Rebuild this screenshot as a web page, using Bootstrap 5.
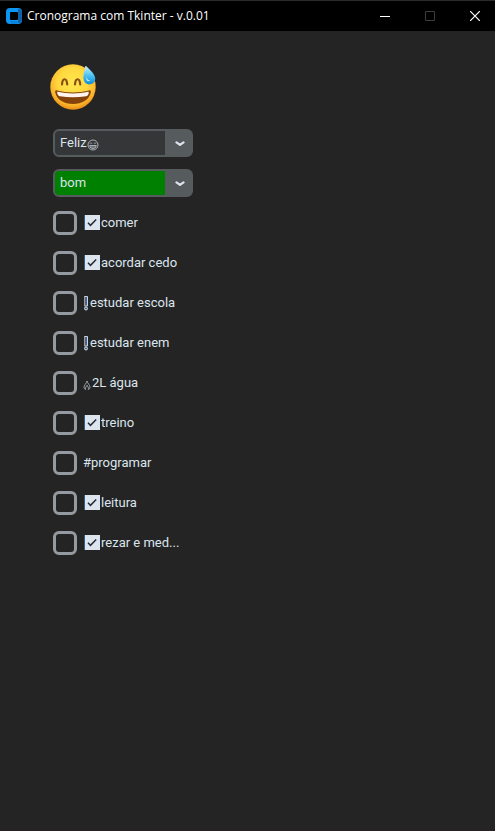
<!DOCTYPE html>
<html lang="pt-BR" data-bs-theme="dark">
<head>
<meta charset="utf-8">
<meta name="viewport" content="width=device-width, initial-scale=1">
<title>Cronograma com Tkinter - v.0.01</title>
<link href="https://cdn.jsdelivr.net/npm/bootstrap@5.3.0/dist/css/bootstrap.min.css" rel="stylesheet">
<style>
body { background: #242424; color: #dce4ee; font: 13px/20px Roboto, sans-serif; border-bottom: 2px solid #272224; }
.titlebar { background: #000; color: #fff; height: 31px; border-top: 1px solid #2b2b2b; font: 12px/30px "Open Sans", sans-serif; padding-left: 6px; }
.app-title { font: inherit; margin-left: 5px; }
.win-buttons { gap: 5px; }
.win-btn { width: 40px; height: 30px; padding: 0; border: 0; border-radius: 0; display: flex; align-items: center; justify-content: center; }
.win-btn:disabled { opacity: 1; border: 0; }
.planner { padding: 32px 48px; }
.mood { margin-bottom: 16px; }
.stack { gap: 12px; padding-left: 5px; }
.combo { width: 140px; height: 28px; border: 2px solid #565b5e; border-radius: 6px; background: #565b5e; overflow: hidden; }
.combo .form-control { background: transparent; color: #dce4ee; font: inherit; padding: 0 5px 2px; border: 0; border-radius: 0; min-height: 0; height: 24px; box-shadow: none; }
.combo-field { background: #343638; width: 110px; height: 24px; position: relative; }
.combo-field.good { background: #008000; }
.grin { position: absolute; left: 32px; top: 8px; }
.combo-btn { flex: 1; padding: 2px 0 0 3px; border: 0; border-radius: 0; height: 24px; display: flex; align-items: center; justify-content: center; }
.task { height: 28px; gap: 6px; }
.task .form-check-input { width: 24px; height: 24px; margin: 0; border: 3px solid #949a9f; border-radius: 6px; background-color: #242424; flex: none; }
.task svg { flex: none; margin: 0 1px; }
.task .tight { margin: 0 1px 0 0; }
</style>
<script src="https://cdn.jsdelivr.net/npm/bootstrap@5.3.0/dist/js/bootstrap.bundle.min.js" defer></script>
</head>
<body class="min-vh-100">
<svg class="d-none" aria-hidden="true">
  <symbol id="tick" viewBox="0 0 16 16">
    <rect width="16" height="15" fill="#2a5f91"/><rect x="1" width="15" height="15" fill="#dce4ee"/>
    <path d="M4 7.7 6.5 10.3 12.2 4.5" fill="none" stroke="#262a35" stroke-width="1.5"/>
  </symbol>
  <symbol id="alert-mark" viewBox="0 0 6 17">
    <path d="M1.5 1.5h3v9.5h-3z" fill="#35679f" stroke="#cbd3df"/><path d="M1.5 1.5v9.5" stroke="#c4926e"/>
    <circle cx="3" cy="13.5" r="1.5" fill="#35679f" stroke="#dce4ee"/>
  </symbol>
  <symbol id="chevron" viewBox="0 0 10 6">
    <path d="M1.5 1.4 5 3.9 8.5 1.4" fill="none" stroke="#dce4ee" stroke-width="2.2" stroke-linecap="round" stroke-linejoin="round"/>
  </symbol>
</svg>
<header class="titlebar d-flex align-items-center">
  <svg width="16" height="16" viewBox="0 0 16 16" aria-hidden="true">
    <rect width="16" height="16" rx="4" fill="#0c96f4"/>
    <path d="M12 1h.5A3.5 3.5 0 0 1 16 4.500v7a3.500 3.500 0 0 1-3.500 3.500H12z" fill="#1261a8"/>
    <path d="M5 16h6l1-3H4z" fill="#0b83dd"/>
    <rect x="4" y="4" width="8" height="8" rx="1" fill="#000"/>
  </svg>
  <h1 class="app-title mb-0 me-auto">Cronograma com Tkinter - v.0.01</h1>
  <div class="win-buttons d-flex">
    <button class="btn win-btn" type="button" aria-label="Minimizar"><svg width="10" height="10"><path d="M0 5.5h10" stroke="#fff"/></svg></button>
    <button class="btn win-btn" type="button" aria-label="Maximizar" disabled><svg width="10" height="10"><path d="M.5.5h9v9h-9z" fill="none" stroke="#3c3c3c"/></svg></button>
    <button class="btn win-btn" type="button" aria-label="Fechar"><svg width="10" height="10"><path d="m0 0 10 10M10 0 0 10" stroke="#fff" stroke-width="1.2"/></svg></button>
  </div>
</header>
<main class="planner">
  <svg class="mood d-block" width="50" height="50" viewBox="0 0 50 50" role="img" aria-label="Sorriso com gota de suor">
    <defs>
      <radialGradient id="face" cx=".5" cy=".4" r=".6"><stop offset="0" stop-color="#ffe64f"/><stop offset=".55" stop-color="#ffd83e"/><stop offset=".83" stop-color="#fbb52b"/><stop offset="1" stop-color="#e98b17"/></radialGradient>
      <linearGradient id="drop" x1="0" y1="0" x2="0" y2="1"><stop offset="0" stop-color="#c9f3ff"/><stop offset=".5" stop-color="#50c4f4"/><stop offset="1" stop-color="#138bd0"/></linearGradient>
    </defs>
    <circle cx="25" cy="24" r="22.7" fill="url(#face)"/>
    <path d="M14 21.500c.5-7 4.700-7 5.200 0M27 21.500c.5-7 4.700-7 5.200 0" fill="none" stroke="#895014" stroke-width="2.200" stroke-linecap="round"/>
    <path d="M9 27.500c10 2.500 22 2.500 32 0 1.500-.5 2 0 1.800 2C41 37 34 41 25 41S9 37 7.200 29.500c-.2-2 .3-2.500 1.800-2z" fill="#85430c"/>
    <path d="M10 28.700c10 2.300 20 2.300 30 0 .8 0 1 .5.6 2-.5 1.600-1.300 2.300-2.600 2.500-8.500 1.500-17.500 1.500-26 0-1.300-.2-2.100-.9-2.600-2.500-.4-1.500-.2-2 .6-2z" fill="#fff4ee"/>
    <path d="M37.200 3.200c.5-.5.900-.3 1.400.2 4 4.300 8.700 7.800 8.700 12.400a5.900 5.900 0 0 1-11.500 1.500c-1.400-5.200 1.200-9 1.400-14.100z" fill="url(#drop)"/>
    <path d="M38.500 14c-1 4 2 5 4 3.500-2 .1-3.200-1-4-3.500z" fill="#b9ecfc"/>
  </svg>
  <form class="stack d-flex flex-column align-items-start">
    <div class="combo d-flex">
      <div class="combo-field">
        <input class="form-control" type="text" value="Feliz" aria-label="Humor">
        <svg class="grin" width="12" height="12" viewBox="0 0 12 12" fill="none" stroke="#b6bdc5" stroke-width=".9" aria-hidden="true"><circle cx="6" cy="6" r="5"/><path d="M3.200 4.500c.3-1 1.300-1 1.600 0M7.200 4.500c.3-1 1.300-1 1.600 0M2.700 6.500h6.600C9 8.500 7.900 9.500 6 9.500S3 8.500 2.700 6.500zM3 8h6"/></svg>
      </div>
      <button class="btn combo-btn" type="button" aria-label="Escolher humor"><svg width="10" height="6"><use href="#chevron"/></svg></button>
    </div>
    <div class="combo d-flex">
      <div class="combo-field good"><input class="form-control" type="text" value="bom" aria-label="Avaliação do dia"></div>
      <button class="btn combo-btn" type="button" aria-label="Escolher avaliação"><svg width="10" height="6"><use href="#chevron"/></svg></button>
    </div>
    <div class="task d-flex align-items-center"><input class="form-check-input" type="checkbox" id="t1"><label class="d-flex align-items-center" for="t1"><svg width="16" height="16"><use href="#tick"/></svg>comer</label></div>
    <div class="task d-flex align-items-center"><input class="form-check-input" type="checkbox" id="t2"><label class="d-flex align-items-center" for="t2"><svg width="16" height="16"><use href="#tick"/></svg>acordar cedo</label></div>
    <div class="task d-flex align-items-center"><input class="form-check-input" type="checkbox" id="t3"><label class="d-flex align-items-center" for="t3"><svg class="tight" width="6" height="17"><use href="#alert-mark"/></svg>estudar escola</label></div>
    <div class="task d-flex align-items-center"><input class="form-check-input" type="checkbox" id="t4"><label class="d-flex align-items-center" for="t4"><svg class="tight" width="6" height="17"><use href="#alert-mark"/></svg>estudar enem</label></div>
    <div class="task d-flex align-items-center"><input class="form-check-input" type="checkbox" id="t5"><label class="d-flex align-items-center" for="t5"><svg class="tight" width="8" height="16" viewBox="0 0 8 16" aria-hidden="true"><path d="M4 6C3.500 8.500 1 10 1 12.200c0 1.200.8 2 1.700 2.300C1.800 12.800 3.500 11.500 4 10.200c.5 1.300 2.200 2.600 1.300 4.300.9-.3 1.700-1.100 1.700-2.300C7 10 4.500 8.500 4 6z" fill="none" stroke="#b6bdc5" stroke-width=".8"/></svg>2L água</label></div>
    <div class="task d-flex align-items-center"><input class="form-check-input" type="checkbox" id="t6"><label class="d-flex align-items-center" for="t6"><svg width="16" height="16"><use href="#tick"/></svg>treino</label></div>
    <div class="task d-flex align-items-center"><input class="form-check-input" type="checkbox" id="t7"><label for="t7">#programar</label></div>
    <div class="task d-flex align-items-center"><input class="form-check-input" type="checkbox" id="t8"><label class="d-flex align-items-center" for="t8"><svg width="16" height="16"><use href="#tick"/></svg>leitura</label></div>
    <div class="task d-flex align-items-center"><input class="form-check-input" type="checkbox" id="t9"><label class="d-flex align-items-center" for="t9"><svg width="16" height="16"><use href="#tick"/></svg>rezar e med...</label></div>
  </form>
</main>
</body>
</html>
